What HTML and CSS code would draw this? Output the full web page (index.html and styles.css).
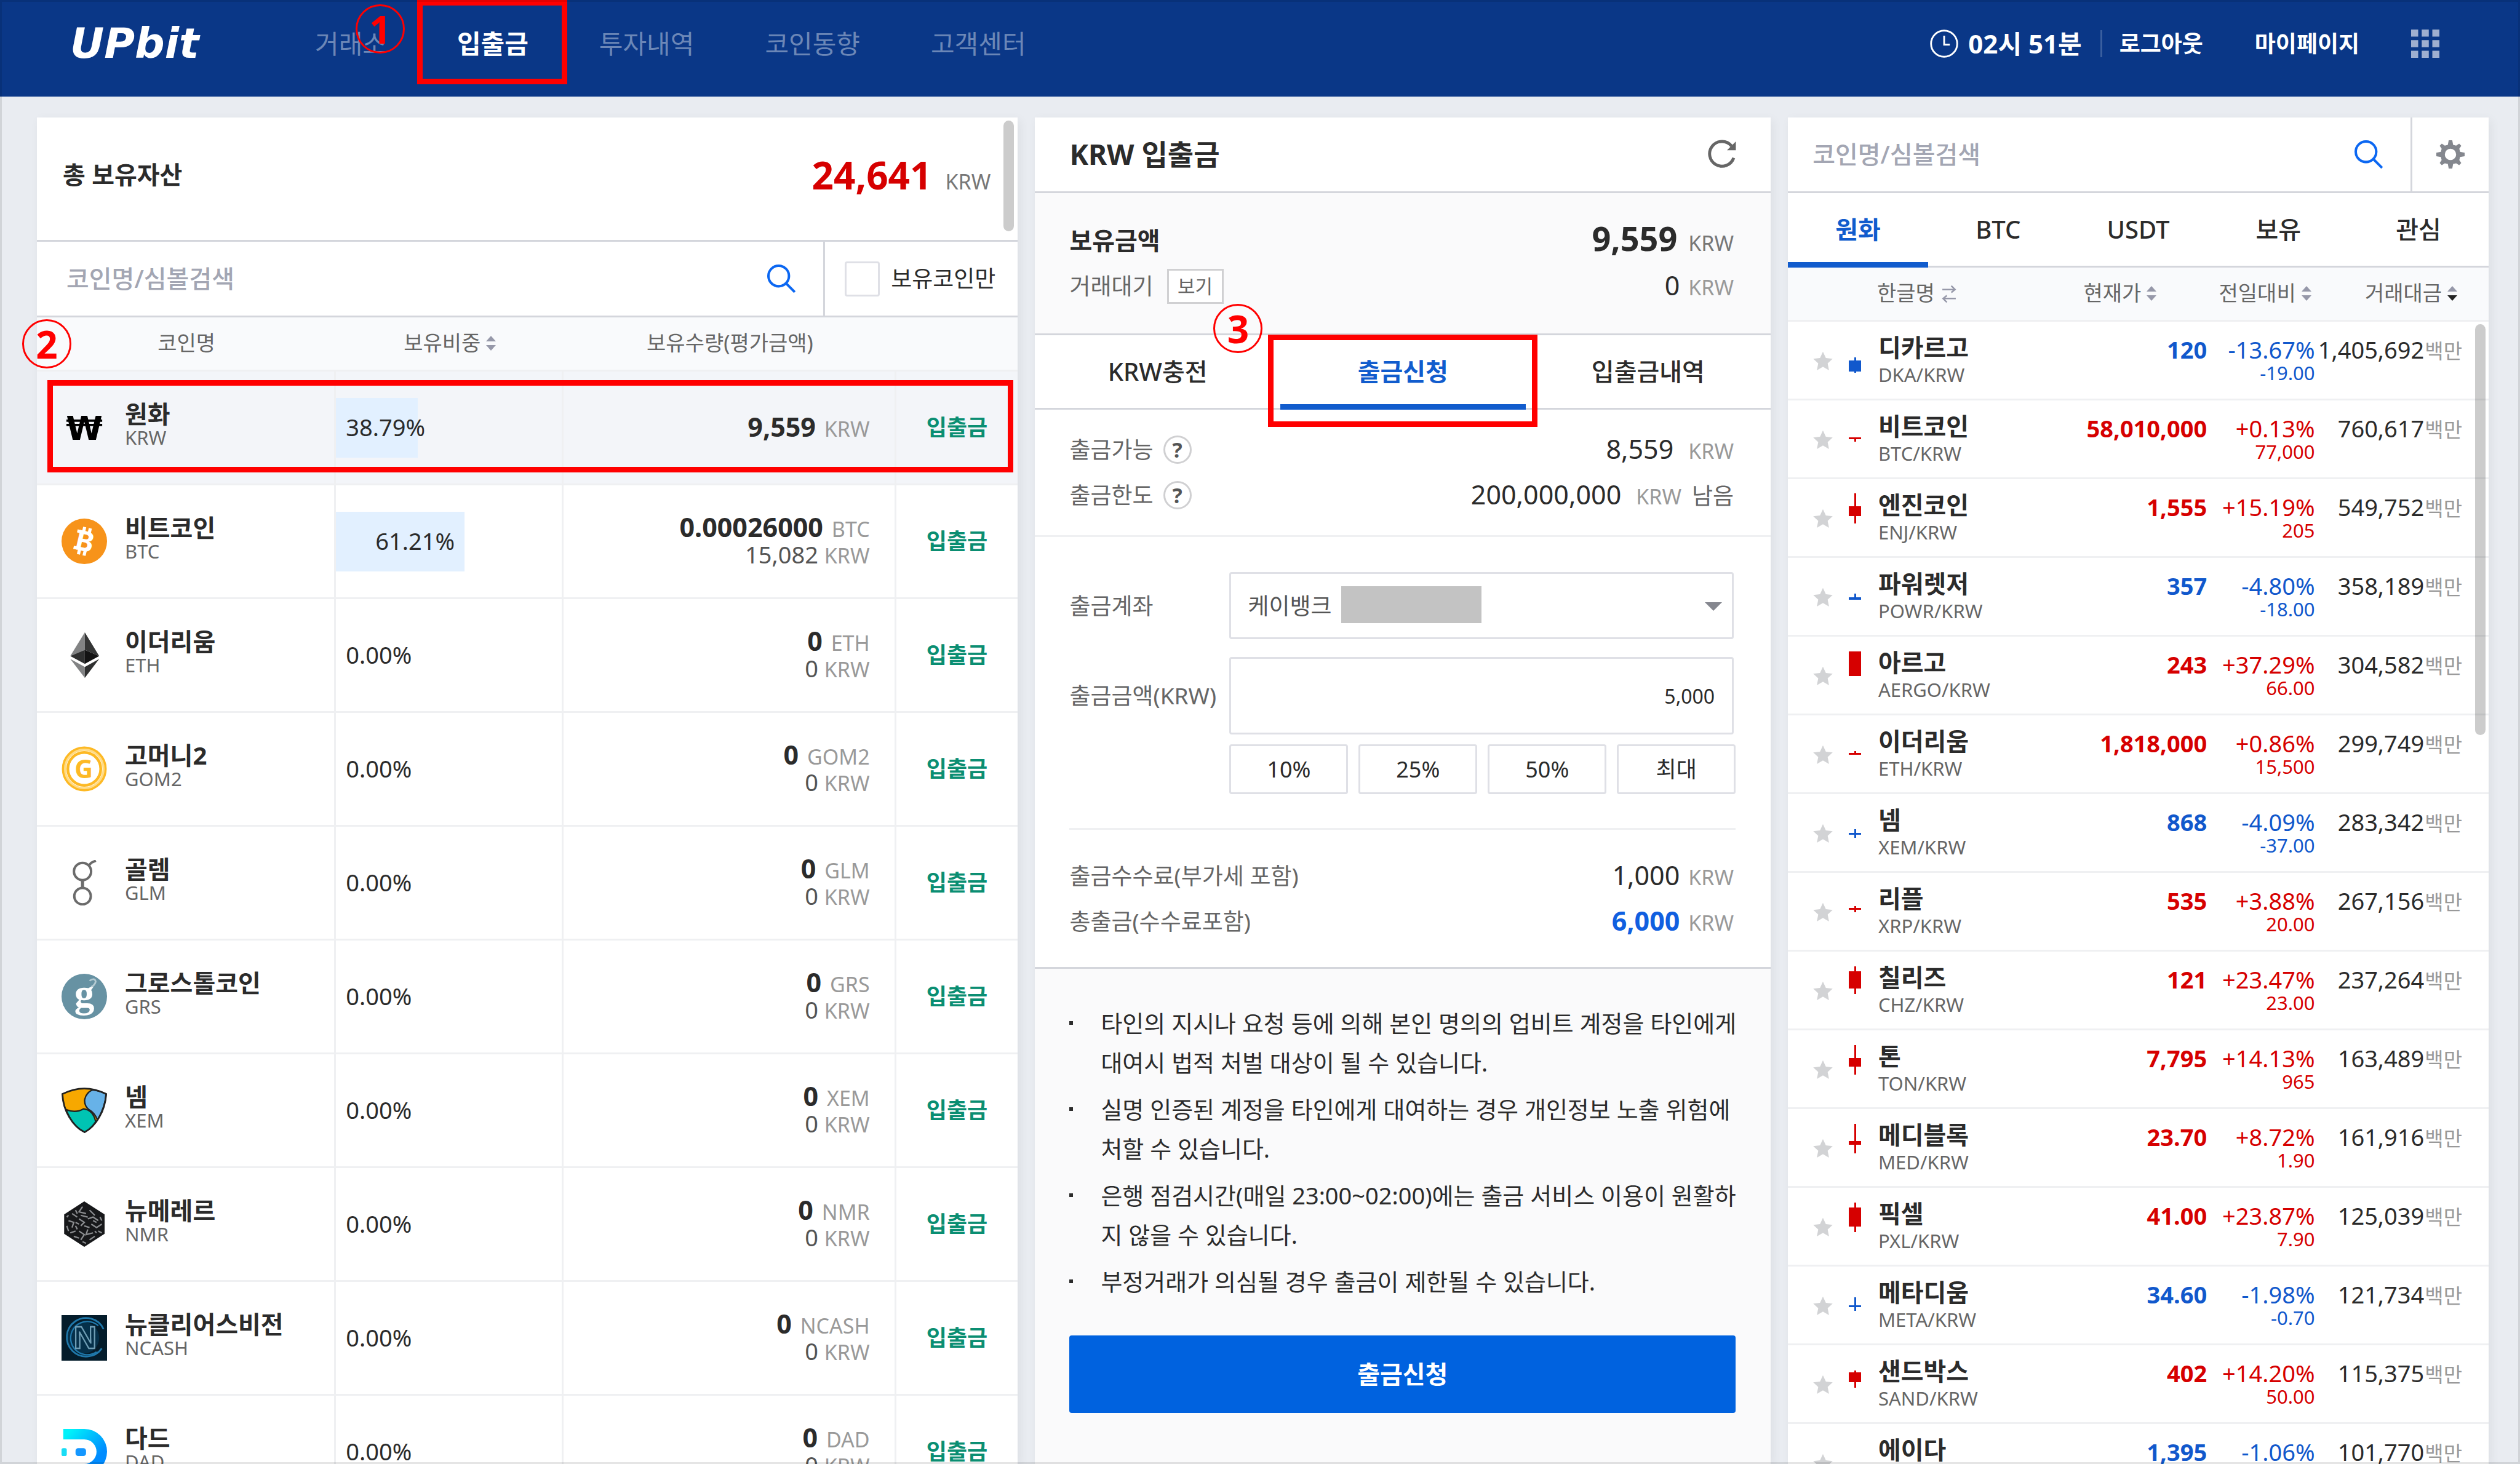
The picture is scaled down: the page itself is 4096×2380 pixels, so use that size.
FILE: index.html
```html
<!DOCTYPE html>
<html lang="ko">
<head>
	<meta charset="UTF-8">
	<meta name="viewport" content="width=device-width, initial-scale=1">
	<title>UPbit 입출금</title>
	<link rel="stylesheet" href="styles.css">
</head>
<body>
	<header class="header">
		<a href="#" class="logo">UPbit</a>
		<nav class="nav">
			<a href="#">거래소</a>
			<a href="#" class="on">입출금</a>
			<a href="#">투자내역</a>
			<a href="#">코인동향</a>
			<a href="#">고객센터</a>
		</nav>
		<div class="user">
			<span class="time">
				<svg width="46" height="46" viewBox="0 0 16 16" fill="none" stroke="#fff"><circle cx="8" cy="8" r="7.4"/><path d="M8 3.5V8.5H11.2"/></svg>
				02시 51분
			</span>
			<a href="#" class="logout">로그아웃</a>
			<a href="#" class="mypage">마이페이지</a>
			<button class="icon_btn" aria-label="menu">
				<svg width="46" height="46" viewBox="0 0 16 16" fill="#9fafd0"><path d="M0 0h4v4H0zM6 0h4v4H6zM12 0h4v4h-4zM0 6h4v4H0zM6 6h4v4H6zM12 6h4v4h-4zM0 12h4v4H0zM6 12h4v4H6zM12 12h4v4h-4z"/></svg>
			</button>
		</div>
		<span class="mark_box box1"></span>
		<span class="mark_num num1">1</span>
	</header>

	<main class="main">
		<!-- assets -->
		<section class="panel assets">
			<div class="total">
				<h2>총 보유자산</h2>
				<p><strong>24,641</strong> <span class="unit">KRW</span></p>
				<span class="scroll scroll1"></span>
			</div>
			<div class="search">
				<input type="text" class="search_text" placeholder="코인명/심볼검색" aria-label="코인명/심볼검색">
				<button class="icon_btn" aria-label="search">
					<svg width="46" height="46" viewBox="0 0 16 16" fill="none" stroke="#0b67f2" stroke-width="1.4"><circle cx="6.5" cy="6.5" r="5.8"/><path d="M10.7 10.7L15.6 15.6"/></svg>
				</button>
				<label class="own"><input type="checkbox">보유코인만</label>
			</div>
			<table class="asset_table">
				<thead>
					<tr>
						<th class="a1">코인명</th>
						<th class="a2">보유비중 <svg class="sort" viewBox="0 0 16 24"><path d="M8 0L16 9H0z"/><path d="M0 15H16L8 24z"/></svg></th>
						<th class="a3">보유수량(평가금액)</th>
						<th class="a4"></th>
					</tr>
				</thead>
				<tbody id="assetRows"></tbody>
			</table>
			<span class="mark_box box2"></span>
			<span class="mark_num num2">2</span>
		</section>

		<!-- withdraw -->
		<section class="panel withdraw">
			<div class="w_title">
				<h2>KRW 입출금</h2>
				<button class="icon_btn" aria-label="refresh">
					<svg width="48" height="46" viewBox="0 0 16 16" fill="none" stroke="#666" stroke-width="1.7"><path d="M14.6 10.3A7 7 0 1 1 13.4 3.6"/><path d="M15.8 1V6H10.8z" fill="#666" stroke="none"/></svg>
				</button>
			</div>
			<div class="w_sum">
				<div class="line">
					<h3>보유금액</h3>
					<p><strong class="big">9,559</strong><span class="unit dark">KRW</span></p>
				</div>
				<div class="line">
					<span class="label">거래대기 <button class="view">보기</button></span>
					<p><span class="num near">0</span><span class="unit">KRW</span></p>
				</div>
			</div>
			<nav class="w_tabs">
				<a href="#">KRW충전</a>
				<a href="#" class="on">출금신청</a>
				<a href="#">입출금내역</a>
			</nav>
			<div class="w_limit">
				<div class="line">
					<span class="label">출금가능 <button class="help">?</button></span>
					<p><span class="num">8,559</span><span class="unit">KRW</span></p>
				</div>
				<div class="line">
					<span class="label">출금한도 <button class="help">?</button></span>
					<p><span class="num">200,000,000</span><span class="unit">KRW</span><span class="left">남음</span></p>
				</div>
			</div>
			<div class="w_form">
				<div class="field">
					<label for="account">출금계좌</label>
					<div class="select_wrap">
						<select id="account"><option>케이뱅크</option></select>
						<span class="hidden_no"></span>
						<svg class="caret" width="28" height="14" viewBox="0 0 28 14" fill="#85878f"><path d="M0 0H28L14 14z"/></svg>
					</div>
				</div>
				<div class="field">
					<label for="amount">출금금액(KRW)</label>
					<input type="text" id="amount" value="5,000">
				</div>
				<div class="rates">
					<button>10%</button>
					<button>25%</button>
					<button>50%</button>
					<button>최대</button>
				</div>
				<div class="fees">
					<div class="line">
						<span class="label">출금수수료(부가세 포함)</span>
						<p><span class="num near">1,000</span><span class="unit">KRW</span></p>
					</div>
					<div class="line">
						<span class="label">총출금(수수료포함)</span>
						<p><strong class="num near blue">6,000</strong><span class="unit">KRW</span></p>
					</div>
				</div>
			</div>
			<div class="w_notice">
				<ul>
					<li>타인의 지시나 요청 등에 의해 본인 명의의 업비트 계정을 타인에게<br>대여시 법적 처벌 대상이 될 수 있습니다.</li>
					<li>실명 인증된 계정을 타인에게 대여하는 경우 개인정보 노출 위험에<br>처할 수 있습니다.</li>
					<li>은행 점검시간(매일 23:00~02:00)에는 출금 서비스 이용이 원활하<br>지 않을 수 있습니다.</li>
					<li>부정거래가 의심될 경우 출금이 제한될 수 있습니다.</li>
				</ul>
				<button class="submit">출금신청</button>
			</div>
			<span class="mark_box box3"></span>
			<span class="mark_num num3">3</span>
		</section>

		<!-- market -->
		<section class="panel market">
			<div class="search">
				<input type="text" class="search_text" placeholder="코인명/심볼검색" aria-label="코인명/심볼검색">
				<button class="icon_btn" aria-label="search">
					<svg width="46" height="46" viewBox="0 0 16 16" fill="none" stroke="#0b67f2" stroke-width="1.4"><circle cx="6.5" cy="6.5" r="5.8"/><path d="M10.7 10.7L15.6 15.6"/></svg>
				</button>
				<button class="icon_btn gear" aria-label="settings">
					<svg width="46" height="46" viewBox="0 0 16 16" fill="#84878e"><path fill-rule="evenodd" d="M7 0H9L9.5 2.6L11.2 3L12.9 1.9L14.1 3.1L13 4.8L13.4 6.5L16 7V9L13.4 9.500L13 11.200L14.100 12.900L12.900 14.100L11.200 13L9.500 13.400L9 16H7L6.500 13.400L4.800 13L3.100 14.100L1.900 12.900L3 11.200L2.600 9.500L0 9V7L2.600 6.500L3 4.800L1.900 3.100L3.100 1.900L4.800 3L6.500 2.600zM8 4.800A3.200 3.200 0 1 0 8 11.200A3.200 3.200 0 1 0 8 4.800z"/></svg>
				</button>
			</div>
			<nav class="m_tabs">
				<a href="#" class="on">원화</a>
				<a href="#">BTC</a>
				<a href="#">USDT</a>
				<a href="#">보유</a>
				<a href="#">관심</a>
			</nav>
			<table class="market_table">
				<thead>
					<tr>
						<th class="m1"></th>
						<th class="m2"></th>
						<th class="m3">한글명 <svg class="swap" viewBox="0 0 22 28"><path d="M2 8H19M14 3L19 8L14 12M20 20H3M8 16L3 20L8 25"/></svg></th>
						<th class="m4">현재가 <svg class="sort" viewBox="0 0 16 24"><path d="M8 0L16 9H0z"/><path d="M0 15H16L8 24z"/></svg></th>
						<th class="m5">전일대비 <svg class="sort" viewBox="0 0 16 24"><path d="M8 0L16 9H0z"/><path d="M0 15H16L8 24z"/></svg></th>
						<th class="m6">거래대금 <svg class="sort down" viewBox="0 0 16 24"><path d="M8 0L16 9H0z"/><path d="M0 15H16L8 24z"/></svg></th>
					</tr>
				</thead>
				<tbody id="marketRows"></tbody>
			</table>
			<span class="scroll scroll2"></span>
		</section>
	</main>
	<script src="script.js"></script>
</body>
</html>
```

FILE: styles.css
```css
*{
	box-sizing: border-box;
	margin: 0;
	padding: 0;
}
html, body{
	height: 100%;
}
body{
	display: flex;
	flex-direction: column;
	overflow: hidden;
	background: #e9ecf1;
	color: #2b2b2b;
	font-family: "Noto Sans", "Noto Sans CJK KR", sans-serif;
	font-size: 37px;
	line-height: 44px;
}
body::after{
	content: "";
	position: fixed;
	inset: 0;
	border: 3px solid rgba(0,0,0,.1);
	pointer-events: none;
}
a{
	color: inherit;
	text-decoration: none;
}
button, input, select{
	font: inherit;
	color: inherit;
}
button{
	cursor: pointer;
}
svg{
	display: block;
}
table{
	width: 100%;
	border-collapse: separate;
	border-spacing: 0;
	table-layout: fixed;
}
.icon_btn{
	border: 0;
	background: none;
}

/* header */
.header{
	position: relative;
	display: flex;
	align-items: center;
	flex: none;
	height: 157px;
	padding: 0 131px 16px 114px;
	background: #0a3787;
	color: #fff;
}
.logo{
	width: 398px;
	font-family: "DejaVu Sans", sans-serif;
	font-size: 68px;
	font-weight: bold;
	font-style: italic;
}
.nav{
	display: flex;
	gap: 115px;
	font-size: 42px;
}
.nav a{
	color: #6c87b7;
}
.nav a.on{
	color: #fff;
	font-weight: bold;
}
.user{
	display: flex;
	align-items: center;
	margin-left: auto;
	font-weight: bold;
}
.time{
	display: flex;
	align-items: center;
	gap: 16px;
	font-size: 42px;
}
.logout{
	margin-left: 30px;
	padding-left: 28px;
	border-left: 3px solid #3a5f9f;
}
.mypage{
	margin: 0 84px;
}

/* panels */
.main{
	display: flex;
	flex: 1;
	gap: 28px;
	min-height: 0;
	padding: 34px 51px 0 60px;
}
.panel{
	position: relative;
	min-width: 0;
	background: #fff;
	box-shadow: 4px 4px 16px rgba(0,0,0,.06);
}
.assets{
	flex: 560 1 0;
}
.withdraw{
	flex: 420 1 0;
	background: #fafafb;
}
.market{
	flex: 400 1 0;
}
.unit{
	font-size: 34px;
	color: #999;
}
.scroll{
	position: absolute;
	width: 17px;
	border-radius: 9px;
	background: rgba(0,0,0,.2);
}
.scroll1{
	top: 5px;
	right: 6px;
	height: 180px;
}
.scroll2{
	top: 336px;
	right: 5px;
	height: 668px;
}

/* search bar */
.search{
	display: flex;
	align-items: center;
	height: 123px;
	border-bottom: 3px solid #d4d6dc;
}
.search_text{
	flex: 1;
	min-width: 0;
	border: 0;
	outline: 0;
	font-size: 40px;
	font-weight: 500;
}
.search_text::placeholder{
	color: #a3a6b3;
	opacity: 1;
}
.assets .search{
	padding-left: 48px;
}
.market .search{
	padding-left: 40px;
}
.search .icon_btn{
	padding: 0 45px;
}
.search .gear{
	align-self: stretch;
	padding: 0 39px;
	border-left: 3px solid #d4d6dc;
}
.own{
	display: flex;
	align-items: center;
	align-self: stretch;
	gap: 18px;
	padding: 0 36px 0 32px;
	border-left: 3px solid #d4d6dc;
}
.own input{
	appearance: none;
	width: 57px;
	height: 57px;
	border: 3px solid #dfe0e6;
	border-radius: 4px;
}

/* assets */
.total{
	display: flex;
	align-items: center;
	justify-content: space-between;
	height: 202px;
	padding: 0 44px 14px 42px;
	border-bottom: 3px solid #d4d6dc;
}
.total h2{
	font-size: 40px;
}
.total p{
	display: flex;
	align-items: baseline;
	padding-top: 12px;
}
.total strong{
	margin-right: 22px;
	font-size: 62px;
	color: #d60000;
}
.total .unit{
	color: #777;
}
th{
	height: 88px;
	padding-bottom: 4px;
	border-bottom: 3px solid #eff0f2;
	background: #f9fafc;
	color: #666;
	font-size: 34px;
	font-weight: normal;
	white-space: nowrap;
}
.sort{
	display: inline-block;
	width: 16px;
	height: 24px;
	fill: #9698a9;
}
.sort.down path + path{
	fill: #222;
}
.swap{
	display: inline-block;
	width: 28px;
	height: 34px;
	vertical-align: -6px;
	fill: none;
	stroke: #9698a9;
	stroke-width: 2;
}
.a1{ width: 30.5%; }
.a2{ width: 23.2%; }
.a3{ width: 33.9%; }
.asset_table td{
	height: 185px;
	border-right: 3px solid #eff0f2;
	border-bottom: 3px solid #eff0f2;
	white-space: nowrap;
}
.asset_table td:last-child{
	border-right: 0;
}
.asset_table .selected td{
	background: #f3f5f9;
}
.coin{
	display: flex;
	align-items: center;
	gap: 29px;
	padding-left: 40px;
}
.coin svg{
	width: 74px;
	height: 74px;
}
.coin_name{
	padding-bottom: 8px;
}
.coin_name strong{
	display: block;
	font-size: 40px;
	line-height: 40px;
}
.code{
	display: block;
	color: #666;
	font-size: 31px;
	line-height: 37px;
}
.bar{
	height: 97px;
	padding: 0 16px 2px 16px;
	background: #e2f0ff;
	font-size: 38px;
	line-height: 94px;
	text-align: right;
}
.bar.empty{
	background: none;
}
.amount{
	padding-right: 40px;
	text-align: right;
	font-size: 38px;
	line-height: 41px;
}
.amount strong{
	margin-right: 4px;
	font-size: 43px;
}
.amount .krw{
	display: block;
	color: #555;
}
.go{
	text-align: center;
	font-size: 36px;
}
.go a{
	color: #0a8e72;
	font-weight: bold;
}

/* withdraw */
.line{
	display: flex;
	align-items: center;
	justify-content: space-between;
	height: 74px;
}
.line p{
	display: flex;
	align-items: baseline;
}
.label{
	display: flex;
	align-items: center;
	gap: 16px;
	color: #666;
}
.num{
	margin-right: 24px;
	font-size: 43px;
}
.num.near{
	margin-right: 14px;
}
.num.blue{
	color: #115fe0;
}
.w_title{
	display: flex;
	align-items: center;
	justify-content: space-between;
	height: 123px;
	padding: 0 55px 2px 56px;
	border-bottom: 3px solid #d4d6dc;
	background: #fff;
}
.w_title h2{
	font-size: 46px;
}
.w_sum{
	height: 231px;
	padding: 40px 60px 0 56px;
	border-bottom: 3px solid #d4d6dc;
}
.w_sum h3{
	font-size: 40px;
}
.big{
	margin-right: 18px;
	font-size: 54px;
}
.unit.dark{
	color: #777;
}
.view{
	width: 92px;
	height: 57px;
	margin-left: 6px;
	border: 3px solid #d0d0d2;
	background: #fff;
	font-size: 31px;
}
.w_tabs, .m_tabs{
	display: flex;
	background: #fff;
	border-bottom: 3px solid #d4d6dc;
	font-size: 40px;
	font-weight: 500;
}
.w_tabs a, .m_tabs a{
	flex: 1;
	height: 118px;
	line-height: 118px;
	text-align: center;
}
.w_tabs .on, .m_tabs .on{
	margin-bottom: -3px;
	height: 121px;
	border-bottom: 9px solid #115ccd;
	color: #115ccd;
	font-weight: bold;
}
.w_limit{
	height: 207px;
	padding: 28px 60px 0 56px;
	border-bottom: 3px solid #eff0f2;
	background: #fff;
}
.help{
	width: 46px;
	height: 46px;
	border: 3px solid #d0d0d2;
	border-radius: 50%;
	background: #fff;
	color: #555;
	font-size: 34px;
	font-weight: bold;
	line-height: 40px;
}
.left{
	margin-left: 17px;
	color: #666;
}
.w_form{
	padding: 57px 57px 37px 56px;
	border-bottom: 3px solid #d4d6dc;
	background: #fff;
}
.field{
	display: flex;
	align-items: center;
	margin-bottom: 29px;
	padding-right: 3px;
}
.field label{
	width: 260px;
	color: #666;
}
.select_wrap{
	position: relative;
	flex: 1;
}
.field select, .field input, .rates button{
	border: 3px solid #dfe0e6;
	border-radius: 4px;
	background: #fff;
}
.field select{
	appearance: none;
	display: block;
	width: 100%;
	height: 109px;
	padding-left: 27px;
	color: #555;
}
.field input{
	flex: 1;
	min-width: 0;
	height: 126px;
	padding: 0 28px;
	font-size: 32px;
	text-align: right;
}
/* masks the account number */
.hidden_no{
	position: absolute;
	top: 23px;
	left: 182px;
	width: 228px;
	height: 60px;
	background: #c3c3c3;
}
.caret{
	position: absolute;
	top: 49px;
	right: 19px;
}
.rates{
	display: flex;
	gap: 17px;
	margin: -13px 0 55px 260px;
}
.rates button{
	flex: 1;
	height: 81px;
	font-size: 36px;
}
.fees{
	padding: 38px 3px 0 0;
	border-top: 3px solid #eff0f2;
}
.w_notice{
	padding: 56px 57px 0 56px;
}
.w_notice ul{
	list-style: none;
}
.w_notice li{
	position: relative;
	margin-bottom: 12px;
	padding-left: 51px;
	font-size: 38px;
	line-height: 64px;
	white-space: nowrap;
}
.w_notice li::before{
	content: "";
	position: absolute;
	top: 29px;
	left: 0;
	width: 6px;
	height: 6px;
	background: #2b2b2b;
}
.submit{
	width: 100%;
	height: 126px;
	margin-top: 44px;
	border: 0;
	border-radius: 4px;
	background: #0062df;
	color: #fff;
	font-size: 40px;
	font-weight: bold;
}

/* market */
.m1{ width: 7.8%; }
.m2{ width: 3.6%; }
.m3{ width: 22%; }
.m4{ width: 26.4%; }
.m5{ width: 15.4%; }
.market_table th{
	text-align: right;
}
.market_table .m3{
	padding-left: 15px;
	text-align: left;
}
.market_table .m4{
	padding-right: 82px;
}
.market_table .m5{
	padding-right: 6px;
}
.market_table .m6{
	padding-right: 51px;
}
.market_table td{
	height: 128px;
	border-bottom: 3px solid #eff0f2;
	text-align: right;
	vertical-align: top;
	white-space: nowrap;
}
.star{
	padding: 47px 0 0 40px;
}
.star svg{
	width: 34px;
	height: 34px;
}
.candle svg{
	width: 20px;
	height: 125px;
	margin-left: 10px;
}
.market_table .name{
	padding: 20px 0 0 17px;
	text-align: left;
}
.name strong{
	display: block;
	font-size: 40px;
}
.name .code{
	line-height: 44px;
}
.price, .rate, .volume{
	padding-top: 23px;
	font-size: 38px;
}
.price{
	font-weight: bold;
}
.rate small{
	display: block;
	font-size: 31px;
	line-height: 32px;
}
.volume{
	padding-right: 43px;
}
.volume small{
	margin-left: 1px;
	color: #999;
	font-size: 33px;
}
.up{
	color: #d60000;
	fill: #d60000;
}
.down_c{
	color: #1158cc;
	fill: #1158cc;
}

/* step marks */
.mark_box{
	position: absolute;
	border: 9px solid #f00;
	pointer-events: none;
}
.mark_num{
	position: absolute;
	width: 80px;
	height: 80px;
	border: 3px solid #f00;
	border-radius: 50%;
	color: #f00;
	font-size: 62px;
	font-weight: bold;
	line-height: 74px;
	text-align: center;
}
.box1{
	top: 0;
	left: 678px;
	width: 244px;
	height: 137px;
}
.num1{
	top: 7px;
	left: 578px;
}
.box2{
	top: 427px;
	left: 17px;
	right: 7px;
	height: 150px;
}
.num2{
	top: 328px;
	left: -24px;
}
.box3{
	top: 353px;
	left: 379px;
	width: 438px;
	height: 150px;
}
.num3{
	top: 303px;
	left: 290px;
}
```

FILE: script.js
```js
var icons = {
	KRW: '<text x="13" y="20" text-anchor="middle" font-family="DejaVu Sans" font-size="19" font-weight="bold">₩</text>',
	BTC: '<circle cx="13" cy="13" r="13" fill="#f7931a"/><g transform="rotate(13 13 13)" fill="#fff"><text x="13.3" y="18.6" text-anchor="middle" font-size="16" font-weight="bold">B</text><path d="M10.5 5H12.3V8H10.5zM13.8 5H15.6V8H13.8zM10.5 18H12.3V21H10.5zM13.8 18H15.6V21H13.8zM7.8 7.2H10V9H7.8zM7.8 16.8H10V18.6H7.8z"/></g>',
	ETH: '<path d="M13.3 0L5 13.5L13.3 10z" fill="#828384"/><path d="M13.3 0L21.5 13.5L13.3 10z" fill="#343535"/><path d="M13.3 10L5 13.5L13.3 18z" fill="#2f3030"/><path d="M13.3 10L21.5 13.5L13.3 18z" fill="#131313"/><path d="M5 15.2L13.3 19.8V26z" fill="#828384"/><path d="M21.5 15.2L13.3 19.8V26z" fill="#2f3030"/>',
	GOM2: '<g fill="none" stroke="#fdb924"><circle cx="13" cy="13" r="12" stroke-width="1.6"/><circle cx="13" cy="13" r="11" stroke="#ffdb86" stroke-width="1.2"/><circle cx="13" cy="13" r="9.4" stroke-width="1.6"/></g><text x="12.7" y="18.3" text-anchor="middle" font-size="14.5" font-weight="bold" fill="#fdb924">G</text>',
	GLM: '<g fill="none" stroke="#6b6b6b" stroke-width="1.4"><circle cx="12" cy="6.6" r="4.9"/><circle cx="12" cy="20.7" r="4.7"/><path d="M12 11.4V16" stroke-width="1.8"/><path d="M15.5 3.2L17 1.6L19.6 .4"/></g>',
	GRS: '<circle cx="13" cy="13" r="13" fill="#6792a3"/><text x="13" y="19" text-anchor="middle" font-family="Liberation Serif" font-size="23" font-weight="bold" fill="#fff">g</text><path d="M16 4Q19 2 19.5 4.5Q19 6.5 17 7.5" fill="none" stroke="#b4cad2"/>',
	XEM: '<path d="M.5 3.7Q13 -2.6 25.5 3.7Q25 11 21.5 17Q18 23 13.2 25.5Q8 23 4.5 17Q.8 11 .5 3.7z" fill="#f7a800"/><path d="M17.5 1.4Q22 1.8 25.5 3.7Q25 11 20.5 18.5Q19 14.5 15.6 12.6Q13 10.5 13.2 7Q14 3 17.5 1.4z" fill="#67b2e8" stroke="#222" stroke-width=".8"/><path d="M2.6 12.6Q8 14.8 12.5 12.2Q18 12.8 19.5 19.5Q17 23.5 13.2 25.5Q6.5 22.5 2.6 12.6z" fill="#00c4b3" stroke="#222" stroke-width=".8"/><path d="M.5 3.7Q13 -2.6 25.5 3.7Q25 11 21.5 17Q18 23 13.2 25.5Q8 23 4.5 17Q.8 11 .5 3.7z" fill="none" stroke="#222"/>',
	NMR: '<path d="M13 0L24.6 7.5V18.5L13 26L1.5 18.5V7.5z" fill="#17181a"/><path d="M6 7L9 9M12 3L10 6L14 7M16 5L19 8M4 11L7 12L6 15M10 10L13 12L11 14M15 10L18 9L21 11M17 13L20 15L23 13M8 17L5 18M10 17L13 19L11 22M15 16L14 19L18 18M19 20L16 22M21 17L23 18M3 9L4 8M8 12L10 13M13 14L16 15M8 5L9 7M11 8L15 9M18 11L20 12M3 14L4 17M7 20L10 21M12 23L14 24M8 14L9 16M19 17L20 18M22 9L23 11" fill="none" stroke="#8b8d90" stroke-width=".8"/>',
	NCASH: '<rect width="26" height="26" fill="#041c2b"/><circle cx="12.5" cy="13" r="9" fill="#05304a"/><g fill="none" stroke="#1f78ab"><path d="M24 8A11 11 0 1 0 23 19"/><path d="M21 6A9.5 9.5 0 1 0 20 21" stroke-width=".8"/></g><text x="13.5" y="19" text-anchor="middle" font-size="17" font-weight="bold" fill="#05304a" stroke="#6f9db4" stroke-width=".8">N</text>',
	DAD: '<defs><linearGradient id="dad" x1="0" y1="0" x2="1" y2="1"><stop offset=".1" stop-color="#00f2fa"/><stop offset=".7" stop-color="#008cff"/></linearGradient></defs><path d="M1 0H13A13 13 0 0 1 13 26H1V20H13A6.8 6.8 0 0 0 13 6H1z" fill="url(#dad)"/><rect x="0" y="11" width="3" height="4.5" rx="1" fill="#19dcf5"/><rect x="8" y="11" width="6" height="4.5" rx="1.5" fill="#1497ff"/>'
};

// name, code, weight, amount, krw
var assets = [
	['원화', 'KRW', 38.79, '9,559', null],
	['비트코인', 'BTC', 61.21, '0.00026000', '15,082'],
	['이더리움', 'ETH', 0, '0', '0'],
	['고머니2', 'GOM2', 0, '0', '0'],
	['골렘', 'GLM', 0, '0', '0'],
	['그로스톨코인', 'GRS', 0, '0', '0'],
	['넴', 'XEM', 0, '0', '0'],
	['뉴메레르', 'NMR', 0, '0', '0'],
	['뉴클리어스비전', 'NCASH', 0, '0', '0'],
	['다드', 'DAD', 0, '0', '0']
];

// name, code, price, rate, change, volume, candle [body top, body bottom, wick top, wick bottom]
var market = [
	['디카르고', 'DKA', '120', '-13.67%', '-19.00', '1,405,692', [63, 81, 58, 83]],
	['비트코인', 'BTC', '58,010,000', '+0.13%', '77,000', '760,617', [60, 63, 60, 67]],
	['엔진코인', 'ENJ', '1,555', '+15.19%', '205', '549,752', [44, 60, 23, 72]],
	['파워렛저', 'POWR', '357', '-4.80%', '-18.00', '358,189', [64, 68, 58, 68]],
	['아르고', 'AERGO', '243', '+37.29%', '66.00', '304,582', [24, 64, 24, 64]],
	['이더리움', 'ETH', '1,818,000', '+0.86%', '15,500', '299,749', [61, 64, 58, 64]],
	['넴', 'XEM', '868', '-4.09%', '-37.00', '283,342', [63, 66, 57, 71]],
	['리플', 'XRP', '535', '+3.88%', '20.00', '267,156', [57, 60, 54, 64]],
	['칠리즈', 'CHZ', '121', '+23.47%', '23.00', '237,264', [32, 60, 24, 69]],
	['톤', 'TON', '7,795', '+14.13%', '965', '163,489', [45, 59, 24, 72]],
	['메디블록', 'MED', '23.70', '+8.72%', '1.90', '161,916', [52, 58, 24, 72]],
	['픽셀', 'PXL', '41.00', '+23.87%', '7.90', '125,039', [32, 63, 24, 72]],
	['메타디움', 'META', '34.60', '-1.98%', '-0.70', '121,734', [63, 66, 50, 72]],
	['샌드박스', 'SAND', '402', '+14.20%', '50.00', '115,375', [44, 60, 41, 69]],
	['에이다', 'ADA', '1,395', '-1.06%', '-15.00', '101,770', [68, 71, 66, 76]]
];

document.getElementById('assetRows').innerHTML = assets.map(function(a, i){
	return '<tr' + (i == 0 ? ' class="selected"' : '') + '>' +
		'<td><div class="coin"><svg viewBox="0 0 26 26">' + icons[a[1]] + '</svg><div class="coin_name"><strong>' + a[0] + '</strong><span class="code">' + a[1] + '</span></div></div></td>' +
		'<td><div class="bar' + (a[2] ? '' : ' empty') + '" style="width:' + (a[2] * 0.93).toFixed(1) + '%">' + a[2].toFixed(2) + '%</div></td>' +
		'<td class="amount"><strong>' + a[3] + '</strong> <span class="unit">' + a[1] + '</span>' +
		(a[4] ? '<span class="krw">' + a[4] + ' <span class="unit">KRW</span></span>' : '') + '</td>' +
		'<td class="go"><a href="#">입출금</a></td></tr>';
}).join('');

document.getElementById('marketRows').innerHTML = market.map(function(m){
	var c = m[3][0] == '-' ? 'down_c' : 'up';
	var k = m[6];
	return '<tr>' +
		'<td class="star"><svg viewBox="0 0 20 20" fill="#d2d3d5"><path d="M10 1L12.8 7L19.3 7.8L14.5 12.2L15.8 18.8L10 15.5L4.2 18.8L5.5 12.2L.7 7.8L7.2 7z"/></svg></td>' +
		'<td class="candle"><svg class="' + c + '" viewBox="0 0 20 125"><rect x="0" y="' + k[0] + '" width="20" height="' + (k[1] - k[0]) + '"/><rect x="9" y="' + k[2] + '" width="3" height="' + (k[3] - k[2]) + '"/></svg></td>' +
		'<td class="name"><strong>' + m[0] + '</strong><span class="code">' + m[1] + '/KRW</span></td>' +
		'<td class="price ' + c + '">' + m[2] + '</td>' +
		'<td class="rate ' + c + '">' + m[3] + '<small>' + m[4] + '</small></td>' +
		'<td class="volume">' + m[5] + '<small>백만</small></td></tr>';
}).join('');
```
